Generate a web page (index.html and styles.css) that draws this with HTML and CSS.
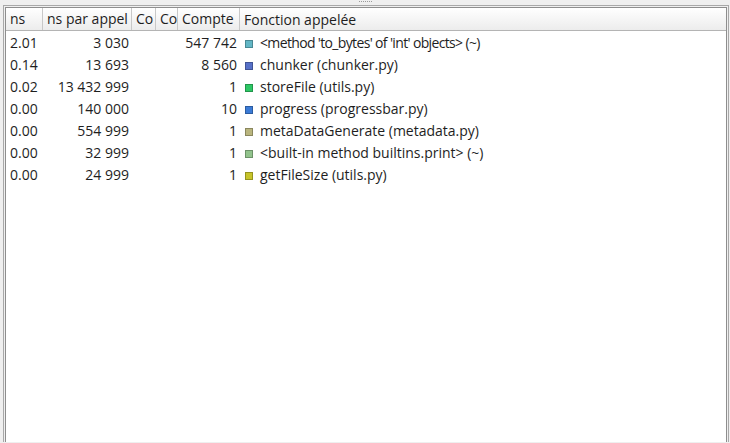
FILE: index.html
```
<!DOCTYPE html>
<html>
<head>
<meta charset="utf-8">
<link rel="stylesheet" href="styles.css">
</head>
<body>
<div class="grip"><span class="dots"></span></div>
<div class="frame">
  <div class="view">
    <div class="row head">
      <div class="c c1">ns</div>
      <div class="c c2">ns par appel</div>
      <div class="c c3">Co</div>
      <div class="c c4">Co</div>
      <div class="c c5">Compte</div>
      <div class="c c6">Fonction appelée</div>
    </div>
    <div class="row">
      <div class="c c1">2.01</div><div class="c c2 num">3 030</div><div class="c c3"></div><div class="c c4"></div><div class="c c5 num">547 742</div>
      <div class="c c6"><span class="sq sq1"></span><span class="tight">&lt;method 'to_bytes' of 'int' objects&gt; (~)</span></div>
    </div>
    <div class="row">
      <div class="c c1">0.14</div><div class="c c2 num">13 693</div><div class="c c3"></div><div class="c c4"></div><div class="c c5 num">8 560</div>
      <div class="c c6"><span class="sq sq2"></span>chunker (chunker.py)</div>
    </div>
    <div class="row">
      <div class="c c1">0.02</div><div class="c c2 num">13 432 999</div><div class="c c3"></div><div class="c c4"></div><div class="c c5 num">1</div>
      <div class="c c6"><span class="sq sq3"></span>storeFile (utils.py)</div>
    </div>
    <div class="row">
      <div class="c c1">0.00</div><div class="c c2 num">140 000</div><div class="c c3"></div><div class="c c4"></div><div class="c c5 num">10</div>
      <div class="c c6"><span class="sq sq4"></span>progress (progressbar.py)</div>
    </div>
    <div class="row">
      <div class="c c1">0.00</div><div class="c c2 num">554 999</div><div class="c c3"></div><div class="c c4"></div><div class="c c5 num">1</div>
      <div class="c c6"><span class="sq sq5"></span>metaDataGenerate (metadata.py)</div>
    </div>
    <div class="row">
      <div class="c c1">0.00</div><div class="c c2 num">32 999</div><div class="c c3"></div><div class="c c4"></div><div class="c c5 num">1</div>
      <div class="c c6"><span class="sq sq6"></span>&lt;built-in method builtins.print&gt; (~)</div>
    </div>
    <div class="row">
      <div class="c c1">0.00</div><div class="c c2 num">24 999</div><div class="c c3"></div><div class="c c4"></div><div class="c c5 num">1</div>
      <div class="c c6"><span class="sq sq7"></span>getFileSize (utils.py)</div>
    </div>
  </div>
</div>
</body>
</html>
```
FILE: styles.css
```
html, body {
  margin: 0;
  padding: 0;
  height: 100%;
  overflow: hidden;
}
body {
  background: #efefef;
  font-family: "Open Sans", "Noto Sans", sans-serif;
  font-size: 14px;
  color: #1e1e1e;
}
.grip {
  height: 5px;
  display: flex;
  justify-content: center;
  padding-left: 2px;
}
.dots {
  width: 14px;
  height: 1px;
  margin-top: 1px;
  background: repeating-linear-gradient(to right, #9a9a9a 0 1px, transparent 1px 2px);
}
.frame {
  margin: 0 1px 0 3px;
  border: 1px solid #a8a8a8;
  border-bottom: none;
  padding: 1px 1px 0 1px;
  height: calc(100vh - 6px);
  box-sizing: border-box;
}
.view {
  border: 1px solid #8e8e8e;
  border-bottom: none;
  background: #fff;
  height: 100%;
  box-sizing: border-box;
}
.row {
  display: grid;
  grid-template-columns: 37px 89px 24px 22px 62px 1fr;
  height: 22px;
  align-items: center;
}
.head {
  height: 22px;
  background: linear-gradient(#ffffff, #ececec);
  border-bottom: 1px solid #b4b4b4;
  margin-bottom: 1px;
  align-items: stretch;
}
.c {
  white-space: nowrap;
  overflow: hidden;
  padding: 0 3px 0 4px;
  line-height: 22px;
  height: 22px;
  box-sizing: border-box;
}
.head .c {
  border-right: 1px solid #c8c8c8;
  line-height: 21px;
}
.head .c6 { border-right: none; }
.num { text-align: right; }
.c6 {
  display: flex;
  align-items: center;
}
.tight { letter-spacing: -0.65px; }
.sq {
  width: 8px;
  height: 8px;
  margin: 1px 7px 0 1px;
  flex: none;
  border: 1px solid rgba(0,0,0,0.25);
  box-sizing: border-box;
}
.sq1 { background: #62b6c5; }
.sq2 { background: #5771c8; }
.sq3 { background: #2dc765; }
.sq4 { background: #3b7bd6; }
.sq5 { background: #b9b57e; }
.sq6 { background: #92c38c; }
.sq7 { background: #c7c42a; }
```
